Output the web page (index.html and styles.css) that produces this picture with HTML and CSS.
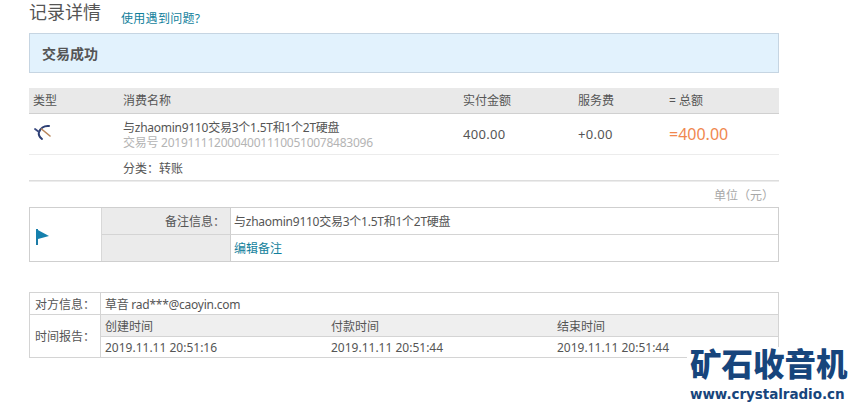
FILE: index.html
```html
<!DOCTYPE html>
<html lang="zh">
<head>
<meta charset="utf-8">
<title>记录详情</title>
<link rel="stylesheet" href="styles.css">
</head>
<body>
<main class="page">
  <header class="head">
    <h1 class="title">记录详情</h1>
    <a class="link help">使用遇到问题?</a>
  </header>
  <div class="status">交易成功</div>

  <section class="trade">
    <div class="trade-row trade-head">
      <span>类型</span><span>消费名称</span><span>实付金额</span><span>服务费</span><span>= 总额</span>
    </div>
    <div class="trade-row trade-main">
      <span class="type-icon">
        <svg width="20" height="20" viewBox="0 0 20 20" fill="none">
          <path d="M16 3C11 2.500 7.500 5.500 6 9c-.8 2.500.5 5 3 7" stroke="#2c3e73" stroke-width="2" stroke-linecap="round"/>
          <path d="M2 6l4 3" stroke="#3a4a80" stroke-width="1.800" stroke-linecap="round"/>
          <path d="M8.500 6l8.500 7" stroke="#b9855a" stroke-width="1.600" stroke-linecap="round"/>
        </svg>
      </span>
      <div class="desc tight">
        <div>与zhaomin9110交易3个1.5T和1个2T硬盘</div>
        <div class="muted">交易号 20191111200040011100510078483096</div>
      </div>
      <span class="amount">400.00</span>
      <span class="amount">+0.00</span>
      <span class="total">=400.00</span>
    </div>
    <div class="trade-row trade-cat">
      <span></span><span class="cat">分类：转账</span>
    </div>
  </section>
  <div class="unit">单位（元）</div>

  <section class="note">
    <div class="flag">
      <svg width="15" height="17" viewBox="0 0 15 17">
        <path d="M1 0h2v16H1z" fill="#1c7ba6"/>
        <path d="M1 0l13 7-11 3H1z" fill="#1580ad"/>
      </svg>
    </div>
    <div class="note-label note-label-top">备注信息：</div>
    <div class="note-value note-value-top tight">与zhaomin9110交易3个1.5T和1个2T硬盘</div>
    <div class="note-label"></div>
    <div class="note-value note-value-low"><a class="link">编辑备注</a></div>
  </section>

  <section class="info">
    <div class="info-label info-top">对方信息：</div>
    <div class="info-party info-top tight">草音 rad***@caoyin.com</div>
    <div class="info-label">时间报告：</div>
    <div class="times">
      <div class="times-row times-head"><span>创建时间</span><span>付款时间</span><span>结束时间</span></div>
      <div class="times-row"><span>2019.11.11 20:51:16</span><span>2019.11.11 20:51:44</span><span>2019.11.11 20:51:44</span></div>
    </div>
  </section>
</main>
<div class="logo">
  <div class="logo-cn">矿石收音机</div>
  <div class="logo-url">www.crystalradio.cn</div>
</div>
</body>
</html>
```
FILE: styles.css
```css
* { box-sizing: border-box; }
html, body { margin: 0; padding: 0; background: #fff; }
body {
  width: 856px;
  height: 407px;
  overflow: hidden;
  position: relative;
  font-family: "Noto Sans", "Noto Sans CJK SC", sans-serif;
  font-size: 12px;
  line-height: 16px;
  color: #555;
}
.page { width: 750px; margin-left: 29px; }
.head { height: 33px; display: flex; align-items: flex-start; }
.title {
  margin: 0;
  width: 92px;
  font-size: 18px;
  line-height: 24px;
  font-weight: 400;
  color: #555;
}
.link { color: #137f9c; }
.help { margin-top: 11px; letter-spacing: .3px; }
.tight { letter-spacing: -.25px; }
.status {
  height: 40px;
  padding-left: 12px;
  background: #e2f2fd;
  border: 1px solid #c6d5e2;
  font-size: 14px;
  font-weight: 700;
  line-height: 39px;
  color: #555;
}
.trade { margin-top: 15px; }
.trade-row {
  display: grid;
  grid-template-columns: 90px 340px 115px 91px 110px;
  padding-left: 4px;
  align-items: center;
}
.trade-head {
  height: 26px;
  background: #e9e9e9;
  border-bottom: 1px solid #d0d0d0;
  color: #555;
}
.trade-main { height: 41px; border-bottom: 1px solid #ececec; }
.trade-cat { height: 27px; border-bottom: 1px solid #ececec; box-shadow: inset 0 -1px 0 #ddd; }
.type-icon { display: flex; margin-top: -2px; }
.desc { line-height: 15px; margin-top: 2px; }
.muted { color: #b4b4b4; }
.amount { font-size: 13px; letter-spacing: .3px; margin-top: -1px; }
.total { font-size: 16px; color: #f0884f; }
.cat { margin-top: 1px; }
.unit {
  height: 25px;
  padding-right: 5px;
  text-align: right;
  line-height: 27px;
  color: #a8a8a8;
}
.note {
  height: 55px;
  display: grid;
  grid-template-columns: 72px 129px 1fr;
  grid-template-rows: 27px 26px;
  border: 1px solid #cfcfcf;
}
.flag {
  grid-row: 1 / 3;
  display: flex;
  align-items: center;
  padding: 5px 0 0 5px;
  border-right: 1px solid #d8d8d8;
}
.note-label {
  background: #ebebeb;
  border-right: 1px solid #cfcfcf;
  padding-right: 5px;
  text-align: right;
  line-height: 27px;
}
.note-value { padding-left: 3px; line-height: 27px; }
.note-value-low { line-height: 28px; }
.note-label-top, .note-value-top { border-bottom: 1px solid #d4d4d4; }
.info {
  height: 66px;
  margin-top: 30px;
  display: grid;
  grid-template-columns: 71px 1fr;
  grid-template-rows: 22px 42px;
  border: 1px solid #d4d4d4;
}
.info-label {
  padding: 2px 0 0 5px;
  border-right: 1px solid #d4d4d4;
  display: flex;
  align-items: center;
  color: #555;
}
.info-top { border-bottom: 1px solid #d4d4d4; }
.info-party { padding-left: 4px; line-height: 23px; }
.times { display: grid; grid-template-rows: 22px 20px; }
.times-row {
  display: grid;
  grid-template-columns: 226px 226px 1fr;
  padding: 2px 0 0 4px;
  align-items: center;
}
.times-head { background: #efefef; border-bottom: 1px solid #d4d4d4; }
.logo {
  position: absolute;
  left: 687px;
  top: 347px;
  width: 169px;
  height: 60px;
  padding-left: 3px;
  background: #fff;
  color: #17457c;
}
.logo-cn {
  font-family: "Noto Sans CJK SC", sans-serif;
  font-size: 31.500px;
  line-height: 30px;
  font-weight: 900;
  white-space: nowrap;
}
.logo-url {
  margin-top: 9px;
  font-family: "DejaVu Sans", sans-serif;
  font-size: 13.500px;
  line-height: 16px;
  font-weight: 700;
  letter-spacing: -.05px;
  white-space: nowrap;
}
```
